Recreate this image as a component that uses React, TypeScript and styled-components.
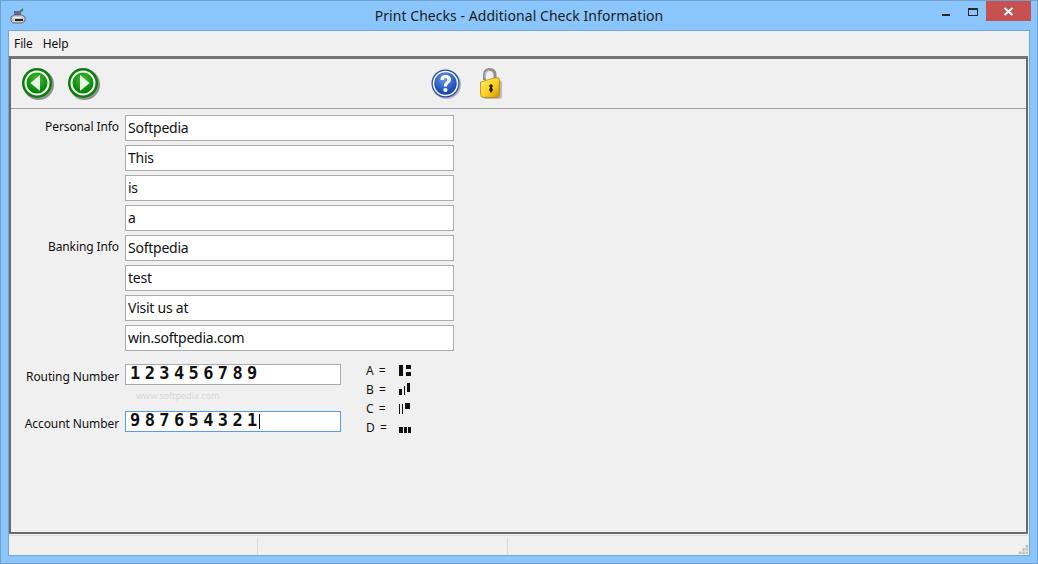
import styled, { createGlobalStyle } from "styled-components";

const GlobalStyle = createGlobalStyle`
  html, body {
    margin: 0;
    padding: 0;
    height: 100%;
    overflow: hidden;
  }
  body {
    font-family: "Noto Sans", "Open Sans", sans-serif;
    color: #111;
  }
`;

const personalInfo = ["Softpedia", "This", "is", "a"];
const bankingInfo = ["Softpedia", "test", "Visit us at", "win.softpedia.com"];

function AppIcon() {
  return (
    <svg width="16" height="16" viewBox="0 0 16 16">
      <path d="M9 5 L13 1" stroke="#2f8f3a" strokeWidth="2" />
      <rect x="4" y="3" width="7" height="5" fill="#5a68b8" />
      <rect x="6" y="4" width="3" height="2" fill="#b04a6a" />
      <path d="M1 9 L4 7 H12 L15 9 V13 L12 15 H3 L1 13 Z" fill="#c9c9c9" stroke="#555" strokeWidth="0.8" />
      <rect x="5" y="11" width="8" height="2" fill="#222" />
      <rect x="3" y="9" width="8" height="1" fill="#f4f4f4" />
    </svg>
  );
}

function ArrowIcon({ dir }: { dir: "left" | "right" }) {
  const id = `g-${dir}`;
  return (
    <svg width="34" height="34" viewBox="0 0 34 34">
      <defs>
        <radialGradient id={id} cx="50%" cy="35%" r="70%">
          <stop offset="0%" stopColor="#4fb83c" />
          <stop offset="60%" stopColor="#0f9410" />
          <stop offset="100%" stopColor="#056a08" />
        </radialGradient>
      </defs>
      <circle cx="17.5" cy="17.5" r="15.5" fill="#00000066" />
      <circle cx="16" cy="16" r="15" fill="#0a7d0c" />
      <circle cx="16" cy="16" r="11.5" fill={`url(#${id})`} stroke="#f4fbf2" strokeWidth="2" />
      {dir === "left" ? (
        <path d="M9.5 16 L19 8 V24 Z" fill="#e9f7e6" />
      ) : (
        <path d="M22.5 16 L13 8 V24 Z" fill="#e9f7e6" />
      )}
    </svg>
  );
}

function HelpIcon() {
  return (
    <svg width="32" height="32" viewBox="0 0 32 32">
      <defs>
        <radialGradient id="help" cx="45%" cy="30%" r="75%">
          <stop offset="0%" stopColor="#6f9be8" />
          <stop offset="65%" stopColor="#2455c0" />
          <stop offset="100%" stopColor="#143a94" />
        </radialGradient>
      </defs>
      <circle cx="16.5" cy="16.5" r="14.5" fill="#00000040" />
      <circle cx="15.5" cy="15.5" r="14" fill="#1e4aaa" />
      <circle cx="15.5" cy="15.5" r="12" fill="url(#help)" stroke="#f2f5fc" strokeWidth="1.6" />
      <path
        d="M10.5 12 C10.5 8.2 13 7 15.6 7 C18.6 7 21 8.7 21 11.6 C21 15.2 17 15.2 17 18.6 H13.8 C13.8 14.2 17.4 14 17.4 11.8 C17.4 10.6 16.6 9.9 15.5 9.9 C14.3 9.9 13.8 10.8 13.8 12 Z"
        fill="#fff"
      />
      <circle cx="15.4" cy="22" r="2.1" fill="#fff" />
    </svg>
  );
}

function LockIcon() {
  return (
    <svg width="24" height="32" viewBox="0 0 24 32">
      <defs>
        <linearGradient id="lock" x1="0" y1="0" x2="1" y2="1">
          <stop offset="0%" stopColor="#ffec70" />
          <stop offset="55%" stopColor="#fbcf1e" />
          <stop offset="100%" stopColor="#d09405" />
        </linearGradient>
      </defs>
      <path d="M5.5 12 V7 C5.5 3 8 1.5 10.5 1.5 C13.5 1.5 16 3 16 7 V10" fill="none" stroke="#8f8f8f" strokeWidth="3" />
      <path d="M6 10 V7 C6 4 8 3 10 2.5" fill="none" stroke="#d2d2d2" strokeWidth="1" />
      <rect x="4" y="12" width="19" height="19" rx="3" fill="#00000038" />
      <path d="M1.5 14 C6 13 13 10 18 9.5 Q20.5 9.5 20.5 12 V26 Q20.5 29.5 17 29.5 H4.5 Q1.5 29.5 1.5 26 Z" fill="url(#lock)" stroke="#a87a08" strokeWidth="0.7" />
      <circle cx="12" cy="18" r="1.8" fill="#222" />
      <path d="M12 17.5 L14 22 L12 25 L10 22 Z" fill="#222" />
    </svg>
  );
}

function App() {
  return (
    <Window>
      <GlobalStyle />
      <TitleBar>
        <AppIconSlot>
          <AppIcon />
        </AppIconSlot>
        <Title>Print Checks - Additional Check Information</Title>
        <WindowControls>
          <MinimizeButton />
          <MaximizeButton />
          <CloseButton>
            <svg width="11" height="9" viewBox="0 0 11 9">
              <path d="M1.5 1 L9.5 8 M9.5 1 L1.5 8" stroke="#fff" strokeWidth="2" />
            </svg>
          </CloseButton>
        </WindowControls>
      </TitleBar>

      <Client>
        <MenuBar>
          <MenuItem>File</MenuItem>
          <MenuItem>Help</MenuItem>
        </MenuBar>

        <MainPanel>
          <Toolbar>
            <ToolGroup $gap={12}>
              <ArrowIcon dir="left" />
              <ArrowIcon dir="right" />
            </ToolGroup>
            <ToolGroup $gap={17} $offset={329}>
              <HelpIcon />
              <LockIcon />
            </ToolGroup>
          </Toolbar>

          <Form>
            <FieldGrid>
              {personalInfo.map((value, i) => (
                <FieldRow key={`p${i}`}>
                  <FieldLabel>{i === 0 ? "Personal Info" : ""}</FieldLabel>
                  <TextBox>{value}</TextBox>
                </FieldRow>
              ))}
              {bankingInfo.map((value, i) => (
                <FieldRow key={`b${i}`}>
                  <FieldLabel>{i === 0 ? "Banking Info" : ""}</FieldLabel>
                  <TextBox>{value}</TextBox>
                </FieldRow>
              ))}
            </FieldGrid>

            <MicrSection>
              <MicrFields>
                <MicrRow>
                  <FieldLabel>Routing Number</FieldLabel>
                  <MicrBox>123456789</MicrBox>
                </MicrRow>
                <MicrRow>
                  <FieldLabel>Account Number</FieldLabel>
                  <MicrBox $focused>
                    987654321
                    <Caret />
                  </MicrBox>
                </MicrRow>
                <Watermark>www.softpedia.com</Watermark>
              </MicrFields>

              <Legend>
                <LegendRow>
                  <LegendLetter>A =</LegendLetter>
                  <Symbol $gap={3}>
                    <Bar $w={4} $h={11} />
                    <SymbolStack>
                      <Bar $w={5} $h={4} />
                      <Bar $w={5} $h={4} />
                    </SymbolStack>
                  </Symbol>
                </LegendRow>
                <LegendRow>
                  <LegendLetter>B =</LegendLetter>
                  <Symbol $gap={2}>
                    <Bar $w={3} $h={6} />
                    <Bar $w={1} $h={9} />
                    <Bar $w={3} $h={9} $up={3} />
                  </Symbol>
                </LegendRow>
                <LegendRow>
                  <LegendLetter>C =</LegendLetter>
                  <Symbol $gap={2}>
                    <Bar $w={1} $h={10} />
                    <Bar $w={1} $h={10} />
                    <Bar $w={5} $h={6} $up={5} />
                  </Symbol>
                </LegendRow>
                <LegendRow>
                  <LegendLetter>D =</LegendLetter>
                  <Symbol $gap={1}>
                    <Bar $w={4} $h={6} />
                    <Bar $w={3} $h={6} />
                    <Bar $w={3} $h={6} />
                  </Symbol>
                </LegendRow>
              </Legend>
            </MicrSection>
          </Form>
        </MainPanel>

        <StatusBar>
          <StatusCell $w={249} />
          <StatusCell $w={250} />
          <Grip>
            <svg width="9" height="9" viewBox="0 0 11 11" fill="#bdbdbd">
              <rect x="8" y="0" width="3" height="3" />
              <rect x="4" y="4" width="3" height="3" />
              <rect x="8" y="4" width="3" height="3" />
              <rect x="0" y="8" width="3" height="3" />
              <rect x="4" y="8" width="3" height="3" />
              <rect x="8" y="8" width="3" height="3" />
            </svg>
          </Grip>
        </StatusBar>
      </Client>
    </Window>
  );
}

const Window = styled.div`
  position: relative;
  box-sizing: border-box;
  display: flex;
  flex-direction: column;
  width: 1038px;
  height: 564px;
  padding: 0 7px 7px;
  background-color: #8ac6fb;
  border: 1px solid #6f9fcb;
`;

const TitleBar = styled.div`
  position: relative;
  display: flex;
  align-items: center;
  justify-content: center;
  height: 29px;
  flex-shrink: 0;
`;

const AppIconSlot = styled.div`
  position: absolute;
  left: 2px;
  top: 6px;
  width: 16px;
  height: 16px;
`;

const Title = styled.div`
  font-size: 14px;
  letter-spacing: 0.05px;
  color: #1c1c1c;
`;

const WindowControls = styled.div`
  position: absolute;
  top: 0;
  right: -1px;
  display: flex;
  align-items: flex-start;
`;

const MinimizeButton = styled.div`
  width: 8px;
  height: 2px;
  margin: 13px 18px 0 0;
  background-color: #2a2a2a;
`;

const MaximizeButton = styled.div`
  box-sizing: border-box;
  width: 10px;
  height: 8px;
  margin: 7px 8px 0 0;
  border: 1px solid #2a2a2a;
  border-top-width: 2px;
`;

const CloseButton = styled.div`
  display: flex;
  align-items: center;
  justify-content: center;
  width: 45px;
  height: 20px;
  background-color: #c75050;
`;

const Client = styled.div`
  flex: 1;
  min-height: 0;
  display: flex;
  flex-direction: column;
  background-color: #f0f0f0;
  border: 1px solid #75a5d3;
`;

const MenuBar = styled.div`
  display: flex;
  gap: 10px;
  align-items: center;
  height: 25px;
  padding-left: 5px;
  flex-shrink: 0;
  background-color: #f0f0f0;
`;

const MenuItem = styled.span`
  font-size: 12px;
  letter-spacing: -0.1px;
  color: #111;
`;

const MainPanel = styled.div`
  flex: 1;
  min-height: 0;
  display: flex;
  flex-direction: column;
  margin-right: 1px;
  border: 2px solid #6a6a6a;
  border-top-width: 3px;
  border-top-color: #757575;
`;

const Toolbar = styled.div`
  display: flex;
  align-items: center;
  height: 49px;
  padding-left: 10px;
  flex-shrink: 0;
  border-bottom: 1px solid #a0a0a0;
`;

const ToolGroup = styled.div<{ $gap: number; $offset?: number }>`
  display: flex;
  align-items: center;
  gap: ${(props) => props.$gap}px;
  margin-left: ${(props) => props.$offset ?? 0}px;
  svg {
    display: block;
  }
`;

const Form = styled.div`
  display: flex;
  flex-direction: column;
  padding-top: 6px;
`;

const FieldGrid = styled.div`
  display: flex;
  flex-direction: column;
  gap: 4px;
`;

const FieldRow = styled.div`
  display: flex;
  align-items: flex-start;
  gap: 6px;
`;

const FieldLabel = styled.div`
  box-sizing: border-box;
  width: 108px;
  padding-top: 3px;
  font-size: 12px;
  letter-spacing: -0.1px;
  text-align: right;
  white-space: nowrap;
  color: #111;
`;

const TextBox = styled.div`
  box-sizing: border-box;
  width: 329px;
  height: 26px;
  padding: 0 2px;
  line-height: 23px;
  font-size: 14px;
  letter-spacing: -0.25px;
  color: #111;
  background-color: #fff;
  border: 1px solid #ababab;
`;

const MicrSection = styled.div`
  display: flex;
  margin-top: 13px;
`;

const MicrFields = styled.div`
  position: relative;
  display: flex;
  flex-direction: column;
  gap: 26px;
`;

const MicrRow = styled.div`
  display: flex;
  align-items: center;
  gap: 6px;
`;

const MicrBox = styled.div<{ $focused?: boolean }>`
  box-sizing: border-box;
  display: flex;
  align-items: center;
  width: 216px;
  height: 21px;
  padding: 0 0 3px 4px;
  font-family: "DejaVu Sans Mono", "Liberation Mono", monospace;
  font-size: 17px;
  font-weight: 700;
  letter-spacing: 4.4px;
  color: #111;
  background-color: #fff;
  border: 1px solid ${(props) => (props.$focused ? "#569de5" : "#ababab")};
`;

const Caret = styled.span`
  width: 1px;
  height: 15px;
  margin: 2px 0 0 -3px;
  background-color: #111;
`;

const Watermark = styled.div`
  position: absolute;
  left: 125px;
  top: 25px;
  font-size: 9px;
  color: #d8d8d8;
`;

const Legend = styled.div`
  display: flex;
  flex-direction: column;
  gap: 3px;
  margin: -2px 0 0 25px;
`;

const LegendRow = styled.div`
  display: flex;
  align-items: center;
  height: 16px;
`;

const LegendLetter = styled.span`
  width: 33px;
  font-size: 12px;
  word-spacing: 2px;
  color: #111;
`;

const Symbol = styled.div<{ $gap: number }>`
  display: flex;
  align-items: flex-end;
  gap: ${(props) => props.$gap}px;
  height: 11px;
`;

const SymbolStack = styled.div`
  display: flex;
  flex-direction: column;
  justify-content: space-between;
  height: 11px;
`;

const Bar = styled.div<{ $w: number; $h: number; $up?: number }>`
  width: ${(props) => props.$w}px;
  height: ${(props) => props.$h}px;
  margin-bottom: ${(props) => props.$up ?? 0}px;
  background-color: #111;
`;

const StatusBar = styled.div`
  display: flex;
  align-items: stretch;
  height: 17px;
  flex-shrink: 0;
  padding-top: 2px;
  margin-top: 1px;
  border-top: 1px solid #dcdcdc;
`;

const StatusCell = styled.div<{ $w: number }>`
  box-sizing: border-box;
  width: ${(props) => props.$w}px;
  border-right: 1px solid #dcdcdc;
`;

const Grip = styled.div`
  margin-left: auto;
  align-self: flex-end;
  padding: 0 1px 1px 0;
  svg {
    display: block;
  }
`;

export default App;
